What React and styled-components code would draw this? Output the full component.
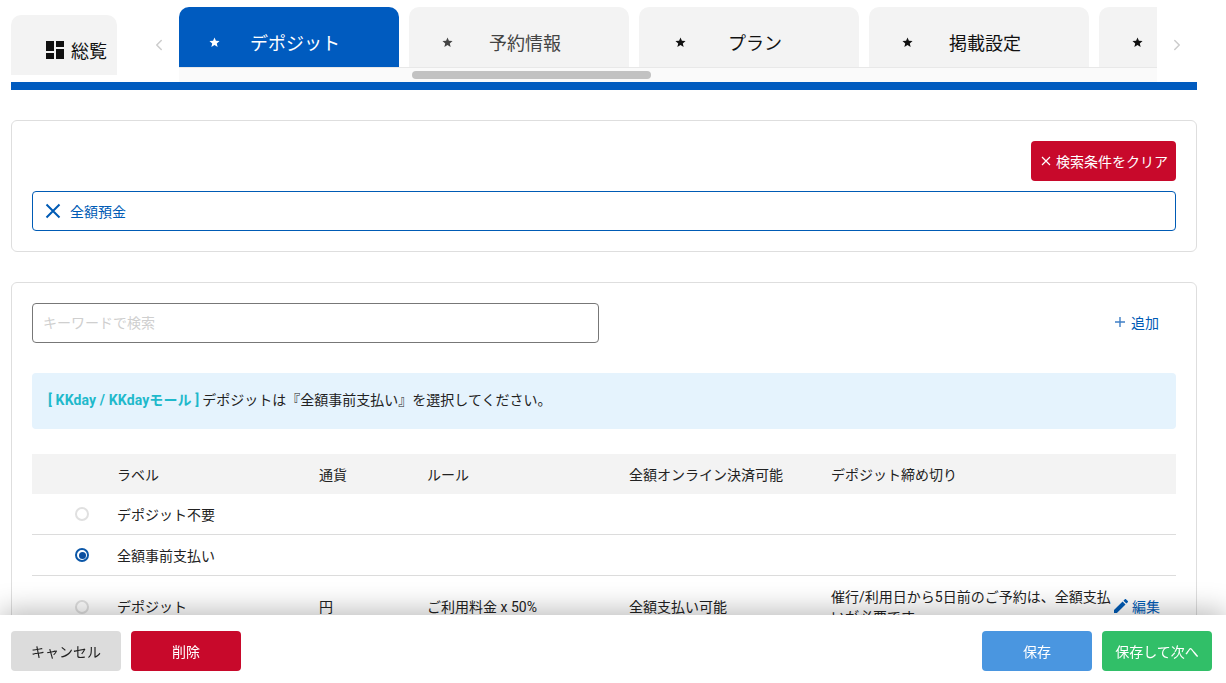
import React from 'react';
import styled, { createGlobalStyle } from 'styled-components';
import { ChevronLeft, ChevronRight } from 'lucide-react';

const Global = createGlobalStyle`
  html, body { margin: 0; padding: 0; height: 100%; background: #fff; overflow: hidden; }
  body { font-family: Roboto, "Noto Sans CJK JP", sans-serif; font-size: 14px; color: #222; }
  * { box-sizing: border-box; }
`;

const Page = styled.div`
  width: 1226px;
  height: 683px;
  overflow: hidden;
  padding: 7px 29px 0 11px;
`;

const TabRow = styled.div`
  display: flex;
  align-items: flex-start;
  height: 75px;
`;

const OverviewTab = styled.div`
  width: 106px;
  height: 60px;
  margin-top: 8px;
  padding: 10px 0 0 35px;
  background: #f3f3f3;
  border-radius: 10px 10px 0 0;
  display: flex;
  align-items: center;
  gap: 7px;
  font-size: 18px;
  color: #111;
`;

const Arrow = styled.div`
  width: 40px;
  height: 60px;
  padding-top: 15px;
  margin-left: ${p => p.$left || 0}px;
  display: flex;
  align-items: center;
  justify-content: center;
  color: #ccc;
`;

const Scroller = styled.div`
  width: 978px;
  height: 75px;
  display: flex;
  flex-direction: column;
  overflow: hidden;
`;

const TabStrip = styled.div`
  display: flex;
  gap: 10px;
  height: 60px;
`;

const Tab = styled.div`
  flex: 0 0 220px;
  height: 60px;
  padding-top: 10px;
  border-radius: 10px 10px 0 0;
  background: ${p => (p.$active ? '#005bbf' : '#f3f3f3')};
  color: ${p => (p.$active ? '#fff' : p.$muted ? '#444' : '#111')};
  display: grid;
  align-items: center;
  font-size: 18px;
`;

const TabStar = styled.svg`
  grid-area: 1 / 1;
  width: 11px;
  height: 11px;
  justify-self: start;
  margin-left: ${p => p.$inset}px;
  fill: currentColor;
`;

const TabLabel = styled.span`
  grid-area: 1 / 1;
  padding-left: 12px;
  text-align: center;
`;

const ScrollTrack = styled.div`
  height: 15px;
  background: #fafafa;
  border-top: 1px solid #e8e8e8;
  padding: 3px 0 0 233px;
`;

const ScrollThumb = styled.div`
  width: 239px;
  height: 8px;
  border-radius: 4px;
  background: #c2c2c2;
`;

const BlueBar = styled.div`
  height: 8px;
  background: #005bbf;
`;

const Card = styled.section`
  margin-top: ${p => p.$top}px;
  border: 1px solid #dedede;
  border-radius: 6px;
  padding: 20px;
`;

const ClearRow = styled.div`
  display: flex;
  justify-content: flex-end;
  margin-bottom: 10px;
`;

const ClearButton = styled.button`
  width: 145px;
  height: 40px;
  border: 0;
  border-radius: 4px;
  background: #c8092b;
  color: #fff;
  font: inherit;
  white-space: nowrap;
  padding: 0 0 0 10px;
  display: flex;
  align-items: center;
  gap: 5px;
`;

const FilterBox = styled.div`
  height: 40px;
  border: 1px solid #005bb5;
  border-radius: 4px;
  display: flex;
  align-items: center;
  padding-left: 12px;
  gap: 9px;
  color: #005bb5;
`;

const SearchRow = styled.div`
  display: flex;
  align-items: center;
  justify-content: space-between;
  margin-bottom: 30px;
`;

const SearchInput = styled.input`
  width: 567px;
  height: 40px;
  border: 1px solid #777;
  border-radius: 4px;
  padding: 0 10px;
  font: inherit;
  outline: none;
  &::placeholder { color: #cfcfcf; opacity: 1; }
`;

const AddLink = styled.div`
  display: flex;
  align-items: center;
  gap: 6px;
  margin-right: 17px;
  padding-bottom: 2px;
  color: #005bb5;
`;

const Notice = styled.div`
  height: 56px;
  border-radius: 4px;
  background: #e5f3fd;
  display: flex;
  align-items: center;
  padding: 0 0 5px 16px;
  color: #222;
  margin-bottom: 25px;
`;

const NoticeTag = styled.b`
  color: #1fb9cb;
  font-weight: 700;
  margin-right: 3px;
  letter-spacing: 0.13px;
`;

const TableRow = styled.div`
  display: grid;
  grid-template-columns: 85px 202px 108px 202px 202px 283px 1fr;
  align-items: center;
  min-height: ${p => (p.$head ? 40 : 41)}px;
  background: ${p => (p.$head ? '#f3f3f3' : 'transparent')};
  border-bottom: ${p => (p.$head ? '0' : '1px solid #dcdcdc')};
  padding: ${p => (p.$tall ? '11px 0' : '1px 0 0')};
  color: #222;
`;

const Radio = styled.span`
  justify-self: end;
  margin: -1px 28px 0 0;
  width: 14px;
  height: 14px;
  border-radius: 50%;
  border: 2px solid ${p => (p.$checked ? '#0b57a8' : '#e0e0e0')};
  display: flex;
  align-items: center;
  justify-content: center;
  background: #fff;
  &::after {
    content: '';
    display: ${p => (p.$checked ? 'block' : 'none')};
    width: 7px;
    height: 7px;
    border-radius: 50%;
    background: #0b4fa0;
  }
`;

const Cell = styled.div`
  line-height: 20px;
`;

const EditLink = styled.div`
  display: flex;
  align-items: center;
  gap: 4px;
  padding-bottom: 3px;
  color: #005bb5;
  white-space: nowrap;
`;

const BottomBar = styled.footer`
  position: fixed;
  left: 0;
  right: 0;
  bottom: 0;
  height: 68px;
  padding: 16px 14px 12px 11px;
  background: #fff;
  box-shadow: 0 -4px 28px rgba(0, 0, 0, 0.28);
  display: flex;
  justify-content: space-between;
`;

const ButtonGroup = styled.div`
  display: flex;
  gap: 10px;
`;

const ActionButton = styled.button`
  width: 110px;
  height: 40px;
  border: 0;
  border-radius: 4px;
  padding: 0;
  font: inherit;
  white-space: nowrap;
  background: ${p => p.$bg};
  color: ${p => p.$fg || '#fff'};
`;

const STAR = '12,1 15.1,8.3 23,8.9 17,14 18.9,21.8 12,17.6 5.1,21.8 7,14 1,8.9 8.9,8.3';

const tabs = [
  { label: 'デポジット', inset: 30, active: true },
  { label: '予約情報', inset: 33, muted: true },
  { label: 'プラン', inset: 36 },
  { label: '掲載設定', inset: 33 },
  { label: '', inset: 33 },
];

const Star = ({ inset }) => (
  <TabStar $inset={inset} viewBox="0 0 24 24"><polygon points={STAR} /></TabStar>
);

const DashboardIcon = () => (
  <svg width="18" height="18" viewBox="0 0 18 18" fill="#111">
    <rect x="0" y="0" width="8" height="10" />
    <rect x="10" y="0" width="8" height="6" />
    <rect x="0" y="12" width="8" height="6" />
    <rect x="10" y="8" width="8" height="10" />
  </svg>
);

const CloseIcon = () => (
  <svg width="16" height="16" viewBox="0 0 16 16" fill="none" stroke="#005bb5" strokeWidth="2">
    <path d="M1.5 1.5 L14.5 14.5 M14.5 1.5 L1.5 14.5" />
  </svg>
);

const SmallCross = () => (
  <svg width="10" height="10" viewBox="0 0 10 10" fill="none" stroke="#fff" strokeWidth="1.2">
    <path d="M1 1 L9 9 M9 1 L1 9" />
  </svg>
);

const PlusIcon = () => (
  <svg width="10" height="10" viewBox="0 0 10 10" fill="none" stroke="#3f7fc6" strokeWidth="1.4">
    <path d="M5 0 V10 M0 5 H10" />
  </svg>
);

const PencilIcon = () => (
  <svg width="14" height="14" viewBox="3 3 18 18" fill="#005bb5">
    <path d="M3 17.25V21h3.75L17.81 9.94l-3.75-3.75L3 17.25zM20.71 7.04a1 1 0 0 0 0-1.41l-2.34-2.34a1 1 0 0 0-1.41 0l-1.83 1.83 3.75 3.75 1.83-1.83z" />
  </svg>
);

export default function App() {
  return (
    <Page>
      <Global />
      <TabRow>
        <OverviewTab><DashboardIcon />総覧</OverviewTab>
        <Arrow $left={22}><ChevronLeft size={18} strokeWidth={2} /></Arrow>
        <Scroller>
          <TabStrip>
            {tabs.map((t, i) => (
              <Tab key={i} $active={t.active} $muted={t.muted}>
                <Star inset={t.inset} />
                <TabLabel>{t.label}</TabLabel>
              </Tab>
            ))}
          </TabStrip>
          <ScrollTrack><ScrollThumb /></ScrollTrack>
        </Scroller>
        <Arrow><ChevronRight size={18} strokeWidth={2} /></Arrow>
      </TabRow>
      <BlueBar />

      <Card $top={30}>
        <ClearRow><ClearButton><SmallCross />検索条件をクリア</ClearButton></ClearRow>
        <FilterBox><CloseIcon />全額預金</FilterBox>
      </Card>

      <Card $top={30}>
        <SearchRow>
          <SearchInput placeholder="キーワードで検索" />
          <AddLink><PlusIcon />追加</AddLink>
        </SearchRow>
        <Notice>
          <NoticeTag>[ KKday / KKdayモール ]</NoticeTag>
          デポジットは『全額事前支払い』を選択してください。
        </Notice>
        <TableRow $head>
          <Cell />
          <Cell>ラベル</Cell>
          <Cell>通貨</Cell>
          <Cell>ルール</Cell>
          <Cell>全額オンライン決済可能</Cell>
          <Cell>デポジット締め切り</Cell>
          <Cell />
        </TableRow>
        <TableRow>
          <Radio />
          <Cell>デポジット不要</Cell>
        </TableRow>
        <TableRow>
          <Radio $checked />
          <Cell>全額事前支払い</Cell>
        </TableRow>
        <TableRow $tall>
          <Radio />
          <Cell>デポジット</Cell>
          <Cell>円</Cell>
          <Cell>ご利用料金 x 50%</Cell>
          <Cell>全額支払い可能</Cell>
          <Cell>催行/利用日から5日前のご予約は、全額支払いが必要です。</Cell>
          <EditLink><PencilIcon />編集</EditLink>
        </TableRow>
      </Card>

      <BottomBar>
        <ButtonGroup>
          <ActionButton $bg="#dcdcdc" $fg="#222">キャンセル</ActionButton>
          <ActionButton $bg="#c8092b">削除</ActionButton>
        </ButtonGroup>
        <ButtonGroup>
          <ActionButton $bg="#4a96e0">保存</ActionButton>
          <ActionButton $bg="#31bf68">保存して次へ</ActionButton>
        </ButtonGroup>
      </BottomBar>
    </Page>
  );
}
